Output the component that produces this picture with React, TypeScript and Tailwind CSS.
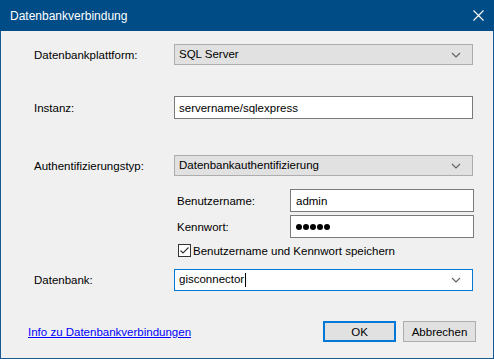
import React from "react";

const font = { fontFamily: '"Liberation Sans", Arial, sans-serif' };

function Chevron() {
  return (
    <svg width="10" height="6" viewBox="0 0 10 6" className="shrink-0">
      <path d="M1 1 L5 5 L9 1" fill="none" stroke="#606060" strokeWidth="1.1" />
    </svg>
  );
}

function Combo({ value, focused, h = "h-[21px]", caret }: { value: string; focused?: boolean; h?: string; caret?: boolean }) {
  return (
    <div
      className={`flex w-[299px] ${h} items-center justify-between border pl-[4px] pr-[11px] ${
        focused ? "border-[#0078d7] bg-white" : "border-[#adadad] bg-[#e1e1e1]"
      }`}
    >
      <span className="flex items-center text-[11.5px] text-black leading-none">
        {value}
        {caret && <span className="ml-[1px] inline-block h-[14px] w-px bg-black" />}
      </span>
      <Chevron />
    </div>
  );
}

export default function App() {
  return (
    <div
      className="flex h-[359px] w-[494px] flex-col border-x border-b border-[#1a5a94] bg-[#f0f0f0] text-[11.5px] leading-[14px] text-black"
      style={font}
    >
      {/* Title bar */}
      <div className="-mx-px flex h-[31px] shrink-0 items-center justify-between bg-[#004c87] pl-[10px] pr-[10px]">
        <span className="text-[12px] text-white">Datenbankverbindung</span>
        <svg width="11" height="11" viewBox="0 0 11 11">
          <path d="M0.5 0.5 L10.5 10.5 M10.5 0.5 L0.5 10.5" stroke="white" strokeWidth="1.1" />
        </svg>
      </div>

      <div className="flex flex-1 flex-col pl-[33px]">
        {/* Platform */}
        <div className="mt-[13px] flex items-center">
          <span className="w-[140px]">Datenbankplattform:</span>
          <Combo value="SQL Server" />
        </div>

        {/* Instanz */}
        <div className="mt-[31px] flex items-center">
          <span className="w-[140px]">Instanz:</span>
          <div className="flex h-[23px] w-[299px] items-center border border-[#7a7a7a] bg-white pl-[4px]">
            servername/sqlexpress
          </div>
        </div>

        {/* Auth */}
        <div className="mt-[36px] flex items-center">
          <span className="w-[140px]">Authentifizierungstyp:</span>
          <Combo value="Datenbankauthentifizierung" />
        </div>

        <div className="ml-[143px] flex flex-col">
          <div className="mt-[13px] flex items-center">
            <span className="w-[113px]">Benutzername:</span>
            <div className="flex h-[23px] w-[184px] items-center border border-[#7a7a7a] bg-white pl-[5px]">
              admin
            </div>
          </div>
          <div className="mt-[3px] flex items-center">
            <span className="w-[113px]">Kennwort:</span>
            <div className="flex h-[23px] w-[184px] items-center gap-[1px] border border-[#7a7a7a] bg-white pl-[5px]">
              {[0, 1, 2, 3, 4].map((i) => (
                <span key={i} className="inline-block h-[6px] w-[6px] rounded-full bg-black" />
              ))}
            </div>
          </div>
          <div className="mt-[6px] flex h-[13px] items-center">
            <div className="ml-[1px] flex h-[13px] w-[13px] items-center justify-center border border-[#333333] bg-white">
              <svg width="11" height="11" viewBox="0 0 11 11">
                <path d="M1.5 5.5 L4 8 L9.5 2.5" fill="none" stroke="#333333" strokeWidth="1.1" />
              </svg>
            </div>
            <span className="ml-[2px]">Benutzername und Kennwort speichern</span>
          </div>
        </div>

        {/* Datenbank */}
        <div className="mt-[12px] flex items-center">
          <span className="w-[140px]">Datenbank:</span>
          <Combo value="gisconnector" focused h="h-[22px]" caret />
        </div>

        {/* Bottom */}
        <div className="mt-[30px] flex items-center">
          <a className="-ml-[6px] text-[#0000ff] underline" href="#">
            Info zu Datenbankverbindungen
          </a>
          <div className="ml-auto mr-[17px] flex gap-[7px]">
            <button className="flex h-[21px] w-[73px] items-center justify-center border-2 border-[#0078d7] bg-[#e1e1e1] text-[11.5px]">
              OK
            </button>
            <button className="flex h-[21px] w-[73px] items-center justify-center border border-[#adadad] bg-[#e1e1e1] text-[11.5px]">
              Abbrechen
            </button>
          </div>
        </div>
      </div>
    </div>
  );
}
